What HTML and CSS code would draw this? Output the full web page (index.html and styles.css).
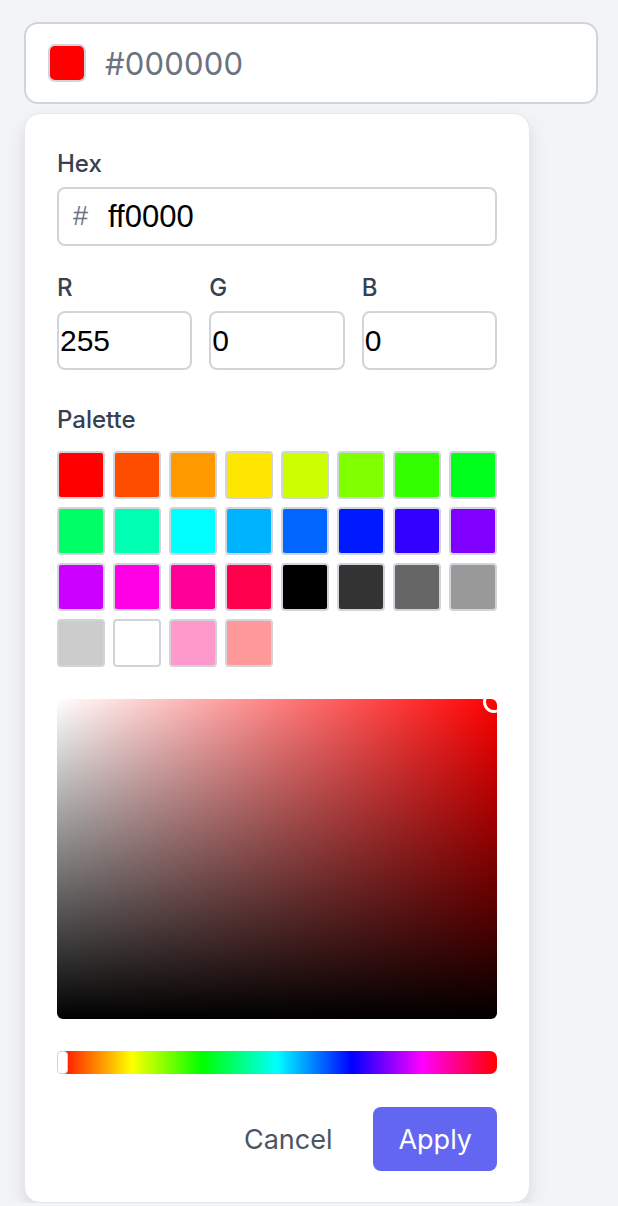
FILE: index.html
```html
<!DOCTYPE html>
<html lang="en">
<head>
<meta charset="utf-8">
<title>Color picker</title>
<link rel="stylesheet" href="styles.css">
</head>
<body>
<div class="page">
  <div class="trigger">
    <span class="trigger-swatch"></span>
    <span class="trigger-value">#000000</span>
  </div>
  <div class="popover">
    <div class="field">
      <label class="label" for="hex">Hex</label>
      <div class="hex-box">
        <span class="hash">#</span>
        <input id="hex" class="hex-input" type="text" value="ff0000">
      </div>
    </div>
    <div class="rgb">
      <div class="field">
        <label class="label" for="r">R</label>
        <input id="r" class="num-input" type="text" value="255">
      </div>
      <div class="field">
        <label class="label" for="g">G</label>
        <input id="g" class="num-input" type="text" value="0">
      </div>
      <div class="field">
        <label class="label" for="b">B</label>
        <input id="b" class="num-input" type="text" value="0">
      </div>
    </div>
    <div class="field palette-field">
      <span class="label label-palette">Palette</span>
      <div class="palette">
        <button class="chip" style="background:#ff0000"></button>
        <button class="chip" style="background:#ff4d00"></button>
        <button class="chip" style="background:#ff9900"></button>
        <button class="chip" style="background:#ffe600"></button>
        <button class="chip" style="background:#ccff00"></button>
        <button class="chip" style="background:#80ff00"></button>
        <button class="chip" style="background:#33ff00"></button>
        <button class="chip" style="background:#00ff1a"></button>
        <button class="chip" style="background:#00ff66"></button>
        <button class="chip" style="background:#00ffb3"></button>
        <button class="chip" style="background:#00ffff"></button>
        <button class="chip" style="background:#00b3ff"></button>
        <button class="chip" style="background:#0066ff"></button>
        <button class="chip" style="background:#001aff"></button>
        <button class="chip" style="background:#3300ff"></button>
        <button class="chip" style="background:#8000ff"></button>
        <button class="chip" style="background:#cc00ff"></button>
        <button class="chip" style="background:#ff00e6"></button>
        <button class="chip" style="background:#ff0099"></button>
        <button class="chip" style="background:#ff004d"></button>
        <button class="chip" style="background:#000000"></button>
        <button class="chip" style="background:#333333"></button>
        <button class="chip" style="background:#666666"></button>
        <button class="chip" style="background:#999999"></button>
        <button class="chip" style="background:#cccccc"></button>
        <button class="chip" style="background:#ffffff"></button>
        <button class="chip" style="background:#ff99cc"></button>
        <button class="chip" style="background:#ff9999"></button>
      </div>
    </div>
    <div class="sv">
      <span class="sv-thumb"></span>
    </div>
    <div class="hue">
      <span class="hue-thumb"></span>
    </div>
    <div class="actions">
      <button class="btn btn-cancel">Cancel</button>
      <button class="btn btn-apply">Apply</button>
    </div>
  </div>
</div>
</body>
</html>
```

FILE: styles.css
```css
* { box-sizing: border-box; }

html, body {
  margin: 0;
  padding: 0;
  background: #f3f4f6;
}

body {
  font-family: Inter, "Noto Sans", "Liberation Sans", sans-serif;
  color: #374151;
}

.page {
  padding: 22px 20px 0 24px;
  display: flex;
  flex-direction: column;
  align-items: flex-start;
}

.trigger {
  width: 574px;
  height: 82px;
  background: #ffffff;
  border: 2px solid #d1d5db;
  border-radius: 14px;
  display: flex;
  align-items: center;
  padding-left: 22px;
  gap: 19px;
}

.trigger-swatch {
  width: 38px;
  height: 38px;
  border-radius: 7px;
  background: #ff0000;
  border: 2px solid #d1d5db;
  flex: none;
}

.trigger-value {
  font-size: 31px;
  color: #6b7280;
  letter-spacing: 0.2px;
}

.popover {
  margin-top: 9px;
  width: 506px;
  background: #ffffff;
  border: 1px solid #e5e7eb;
  border-radius: 16px;
  box-shadow: 0 10px 25px rgba(17, 24, 39, 0.08), 0 4px 10px rgba(17, 24, 39, 0.04);
  padding: 32px 32px 31px;
  display: flex;
  flex-direction: column;
}

.field {
  display: flex;
  flex-direction: column;
}

.label {
  font-size: 24px;
  font-weight: 500;
  line-height: 32px;
  padding-top: 2px;
  color: #374151;
  margin-bottom: 7px;
}

.hex-box {
  height: 59px;
  border: 2px solid #d1d5db;
  border-radius: 8px;
  display: flex;
  align-items: center;
  padding-left: 14px;
}

.hash {
  font-family: "Liberation Sans", Arial, sans-serif;
  font-size: 27px;
  color: #6b7280;
  width: 35px;
}

.hex-input {
  border: none;
  outline: none;
  padding: 0;
  font-family: "Liberation Sans", Arial, sans-serif;
  font-size: 31px;
  color: #000000;
  flex: 1;
  min-width: 0;
  background: transparent;
}

.rgb {
  margin-top: 24px;
  display: grid;
  grid-template-columns: repeat(3, 1fr);
  gap: 17px;
}

.num-input {
  width: 100%;
  height: 59px;
  border: 2px solid #d1d5db;
  border-radius: 8px;
  padding: 0 2px 0 1px;
  font-family: "Liberation Sans", Arial, sans-serif;
  font-size: 30px;
  color: #000000;
  background: #ffffff;
  outline: none;
}

.palette-field {
  margin-top: 32px;
}

.label-palette {
  margin-bottom: 15px;
}

.palette {
  display: grid;
  grid-template-columns: repeat(8, 48px);
  grid-auto-rows: 48px;
  gap: 8px;
}

.chip {
  padding: 0;
  margin: 0;
  border: 2px solid #d1d5db;
  border-radius: 4px;
  cursor: pointer;
}

.sv {
  margin-top: 32px;
  height: 320px;
  border-radius: 6px;
  position: relative;
  overflow: hidden;
  background:
    linear-gradient(to bottom, rgba(0, 0, 0, 0), #000000),
    linear-gradient(to right, #ffffff, rgba(255, 255, 255, 0)),
    #ff0000;
}

.sv-thumb {
  position: absolute;
  top: -8px;
  right: -8px;
  width: 22px;
  height: 22px;
  border-radius: 50%;
  border: 3px solid #ffffff;
}

.hue {
  margin-top: 32px;
  height: 23px;
  border-radius: 7px;
  position: relative;
  background: linear-gradient(to right,
    #ff0000 0%, #ffff00 17%, #00ff00 33%, #00ffff 50%,
    #0000ff 67%, #ff00ff 83%, #ff0000 100%);
}

.hue-thumb {
  position: absolute;
  left: 0;
  top: 0;
  width: 11px;
  height: 23px;
  background: #ffffff;
  border: 1px solid #d1d5db;
  border-radius: 4px;
}

.actions {
  margin-top: 33px;
  display: flex;
  justify-content: flex-end;
  gap: 16px;
}

.btn {
  height: 64px;
  padding: 0 25px;
  border: none;
  border-radius: 8px;
  font-family: Inter, "Noto Sans", "Liberation Sans", sans-serif;
  font-size: 27px;
  cursor: pointer;
}

.btn-cancel {
  background: transparent;
  color: #4b5563;
}

.btn-apply {
  background: #6366f1;
  color: #ffffff;
}
```
